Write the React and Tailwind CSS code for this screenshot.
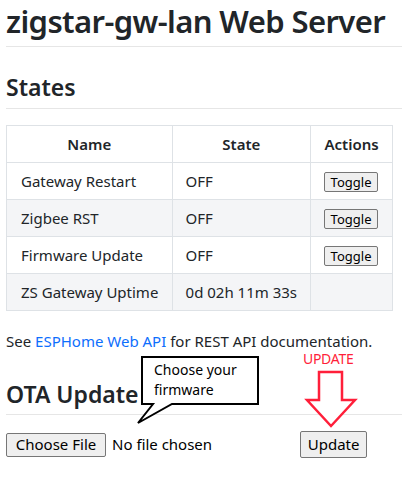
const rows = [
  { name: 'Gateway Restart', state: 'OFF', toggle: true },
  { name: 'Zigbee RST', state: 'OFF', toggle: true },
  { name: 'Firmware Update', state: 'OFF', toggle: true },
  { name: 'ZS Gateway Uptime', state: '0d 02h 11m 33s', toggle: false },
]

function ToggleButton() {
  return (
    <button className="h-[20px] w-[54px] rounded-[2px] border border-[#767676] bg-[#efefef] text-[13px] leading-none text-black">
      Toggle
    </button>
  )
}

function Callout() {
  return (
    <svg className="absolute left-[134px] top-[354px]" width="130" height="74" viewBox="0 0 130 74">
      <path
        d="M8 3 H124 V50 H38 L4 69 L19 50 H8 Z"
        fill="white"
        stroke="black"
        strokeWidth="2"
        strokeLinejoin="miter"
      />
    </svg>
  )
}

function RedArrow() {
  return (
    <svg className="absolute left-[304px] top-[369px]" width="54" height="60" viewBox="0 0 54 60">
      <path
        d="M15 3 H38 V31 H51 L27 57 L3 31 H15 Z"
        fill="white"
        stroke="#ff1f3a"
        strokeWidth="2.5"
      />
    </svg>
  )
}

export default function App() {
  return (
    <div className="relative h-[483px] w-[402px] overflow-hidden bg-white pl-[6px] font-['Noto_Sans',sans-serif] text-[#212529]">
      <h1 className="whitespace-nowrap border-b border-[#e6e6e6] pb-[6px] pt-[2px] text-[31px] font-semibold leading-[38px] tracking-[-0.6px]">
        zigstar-gw-lan Web Server
      </h1>

      <h2 className="mt-[24px] border-b border-[#e6e6e6] pb-[5px] text-[23px] font-semibold leading-[32px]">
        States
      </h2>

      <table className="mt-[16px] w-[387px] border-collapse text-[15px]">
        <colgroup>
          <col className="w-[166px]" />
          <col className="w-[139px]" />
          <col className="w-[82px]" />
        </colgroup>
        <thead>
          <tr className="h-[37px]">
            <th className="border border-[#dee2e6] text-center font-semibold">Name</th>
            <th className="border border-[#dee2e6] text-center font-semibold">State</th>
            <th className="border border-[#dee2e6] text-center font-semibold">Actions</th>
          </tr>
        </thead>
        <tbody>
          {rows.map((row, i) => (
            <tr key={row.name} className={`h-[37px] ${i % 2 === 1 ? 'bg-[#f4f5f7]' : 'bg-white'}`}>
              <td className="border border-[#dee2e6] pl-[14px]">{row.name}</td>
              <td className="border border-[#dee2e6] pl-[13px]">{row.state}</td>
              <td className="border border-[#dee2e6] pl-[13px]">{row.toggle && <ToggleButton />}</td>
            </tr>
          ))}
        </tbody>
      </table>

      <p className="mt-[19px] text-[15px] leading-[22px]">
        See <a className="text-[#0d6efd]">ESPHome Web API</a> for REST API documentation.
      </p>

      <h2 className="mt-[26px] w-[396px] border-b border-[#e6e6e6] pb-[4px] text-[23px] font-semibold leading-[32px]">
        OTA Update
      </h2>

      <div className="mt-[16px] flex items-center">
        <button className="h-[24px] w-[100px] rounded-[2px] border border-[#767676] bg-[#efefef] text-[15px] leading-none text-black">
          Choose File
        </button>
        <span className="ml-[6px] text-[15px] text-black">No file chosen</span>
        <button className="ml-[88px] h-[27px] w-[67px] rounded-[2px] border border-[#767676] bg-[#efefef] text-[15px] leading-none text-black">
          Update
        </button>
      </div>

      <Callout />
      <div className="absolute left-[154px] top-[360px] text-[14px] leading-[20px] text-black">
        Choose your
        <br />
        firmware
      </div>

      <RedArrow />
      <div className="absolute left-[303px] top-[352px] text-[14px] leading-[14px] tracking-[-0.3px] text-[#ff1f3a]">UPDATE</div>
    </div>
  )
}
